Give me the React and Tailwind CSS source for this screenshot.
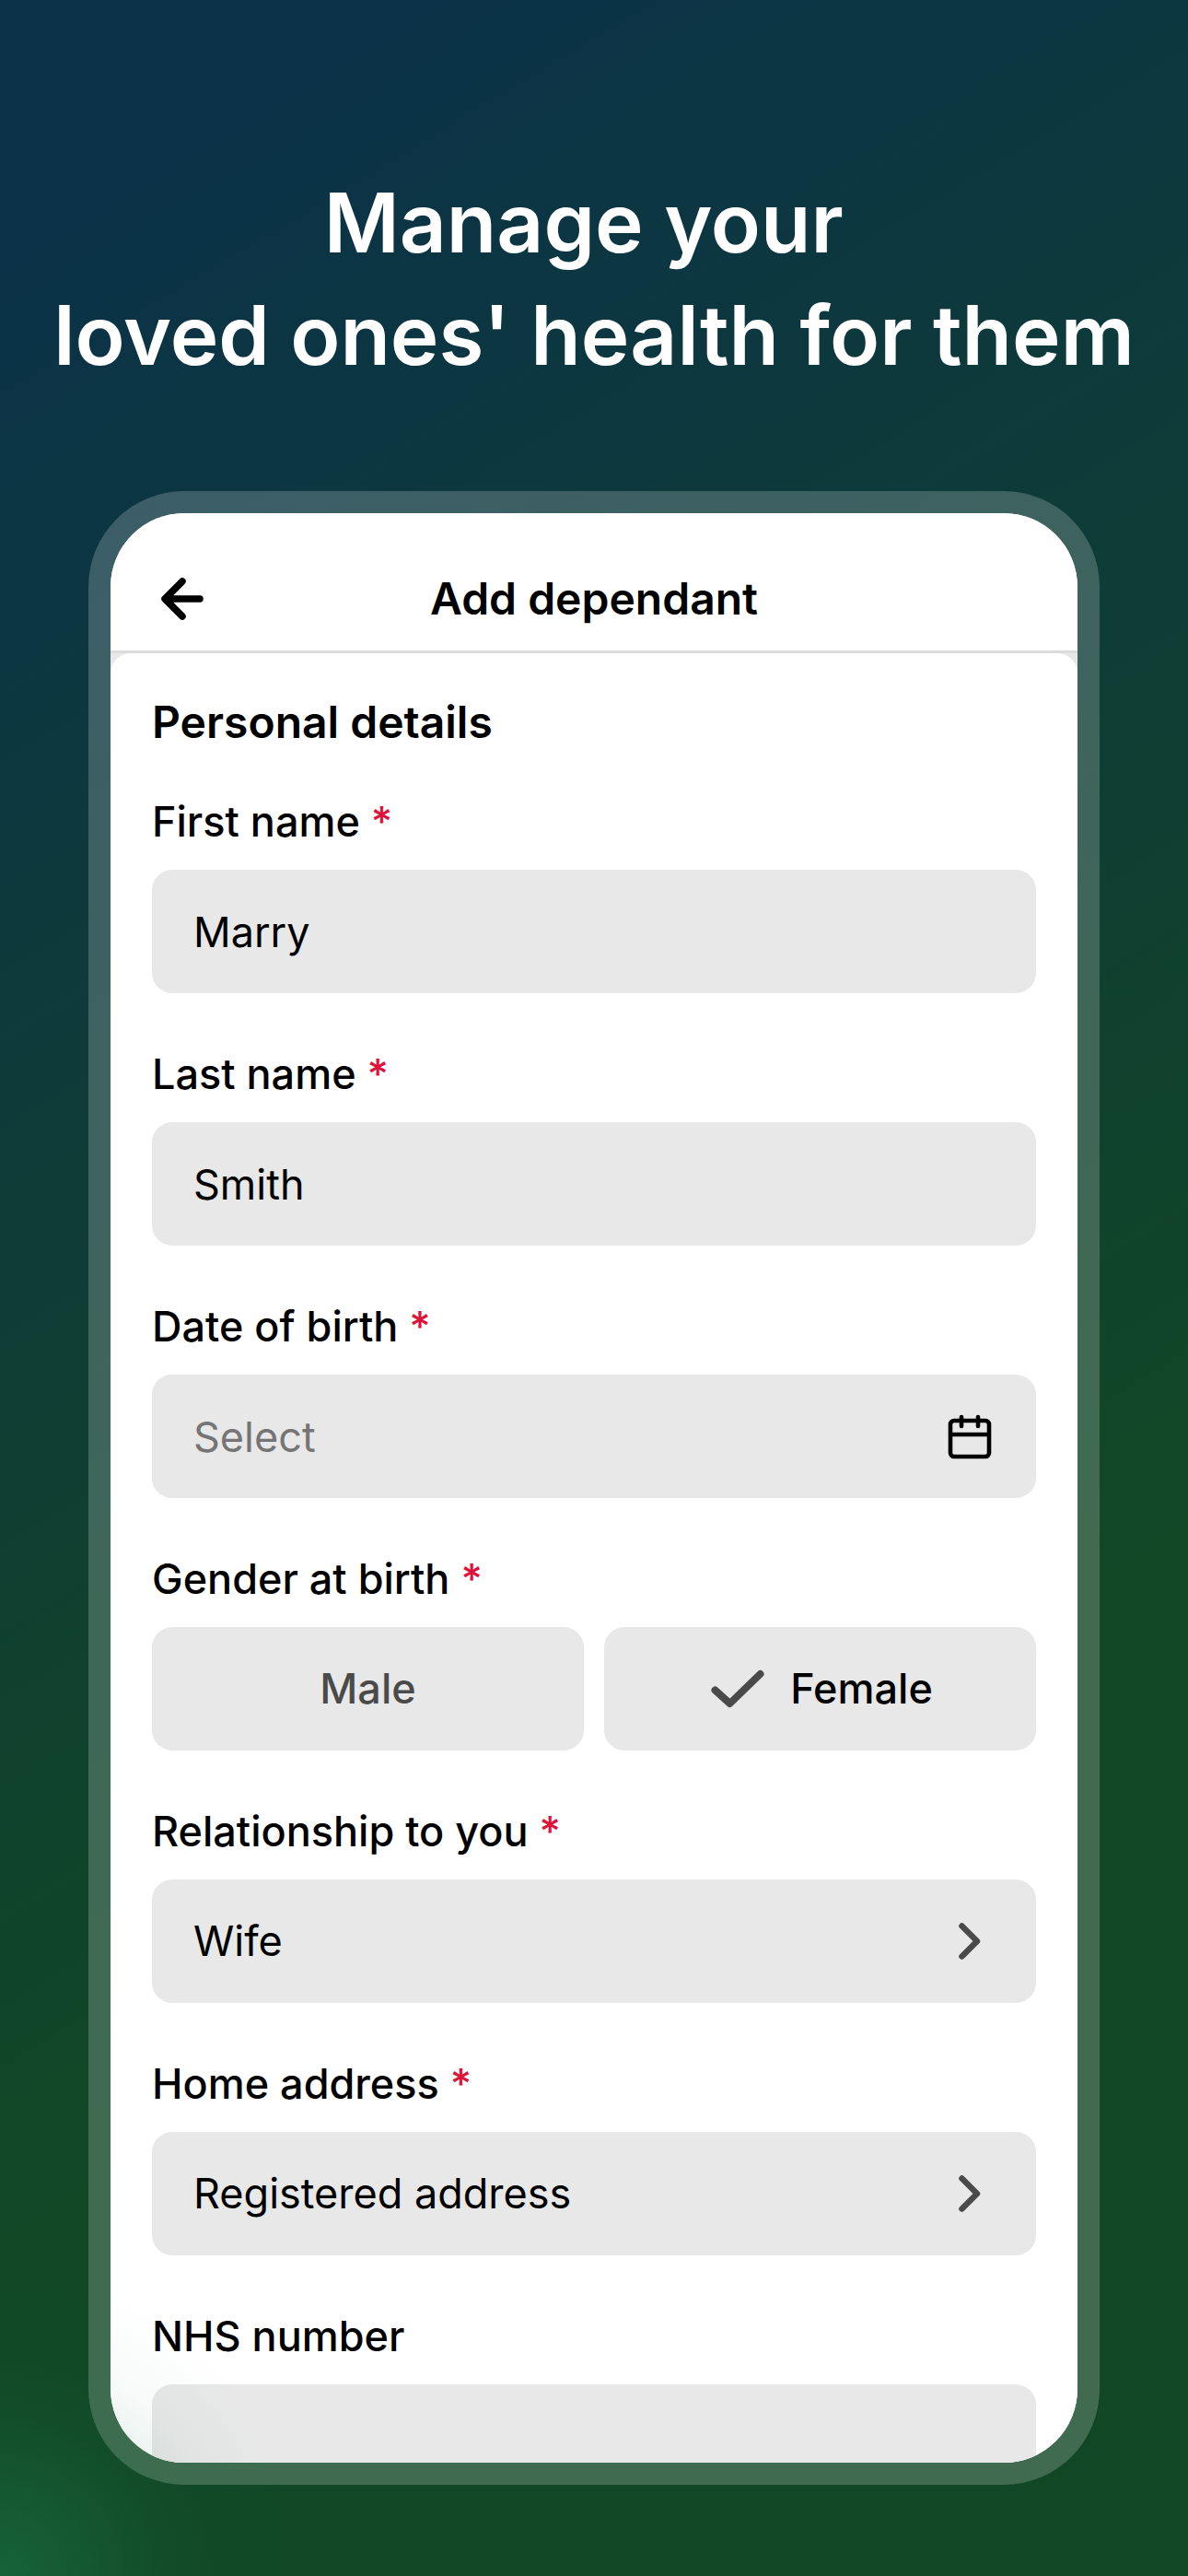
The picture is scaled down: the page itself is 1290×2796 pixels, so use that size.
import { useState } from "react";

const inputStyle =
  "w-full h-[134px] rounded-[22px] bg-[#e8e8e8] px-[45px] text-left text-[45px] text-black placeholder-[#757575] outline-none";

function Label({ id, text, required = true }) {
  return (
    <label htmlFor={id} className="text-[45px] leading-[56px] font-medium">
      {text}
      {required && <span className="text-[#dc143c]"> *</span>}
    </label>
  );
}

function ArrowLeft() {
  return (
    <svg viewBox="0 0 46 46" className="w-[46px] h-[46px]" fill="none">
      <path
        d="M23 4 4 23l19 19M5 23h37"
        stroke="currentColor"
        strokeWidth="7.5"
        strokeLinecap="round"
        strokeLinejoin="round"
      />
    </svg>
  );
}

function CalendarIcon() {
  return (
    <svg viewBox="0 0 48 50" className="w-12 h-[50px] shrink-0" fill="none">
      <path
        d="M7 8h34a4 4 0 0 1 4 4v31a4 4 0 0 1-4 4H7a4 4 0 0 1-4-4V12a4 4 0 0 1 4-4zM3 23h42M15 4v10M33 4v10"
        stroke="currentColor"
        strokeWidth="4.6"
        strokeLinecap="round"
      />
    </svg>
  );
}

function CheckIcon() {
  return (
    <svg viewBox="0 0 58 42" className="w-[58px] h-[42px]" fill="none">
      <path
        d="M4.5 22.5 20.5 37 53.5 5"
        stroke="#4a4a4a"
        strokeWidth="8"
        strokeLinecap="round"
        strokeLinejoin="round"
      />
    </svg>
  );
}

function ChevronRight() {
  return (
    <svg viewBox="0 0 24 40" className="w-6 h-10" fill="none">
      <path
        d="M3.5 3.5 20 20 3.5 36.5"
        stroke="#4a4a4a"
        strokeWidth="6.5"
        strokeLinecap="round"
        strokeLinejoin="round"
      />
    </svg>
  );
}

export default function App() {
  const [firstName, setFirstName] = useState("Marry");
  const [lastName, setLastName] = useState("Smith");
  const [birthDate, setBirthDate] = useState("");
  const [gender, setGender] = useState("Female");
  const [nhsNumber, setNhsNumber] = useState("");

  return (
    <div className="relative min-h-screen overflow-hidden bg-[linear-gradient(149deg,#0b3248_8%,#114725_68%)] font-[Inter,sans-serif] px-24 pt-[181px] pb-[99px]">
      <h1 className="-mx-24 text-center whitespace-pre text-[89px] leading-[122px] font-semibold text-white">
        {"Manage your \nloved ones' health for them"}
      </h1>

      <div className="mt-[108px] rounded-[104px] bg-white/20 p-6">
        <div className="h-[2116px] overflow-hidden rounded-[80px] bg-[#e8e8e8] text-black">
          <header className="grid grid-cols-[1fr_auto_1fr] items-center border-b-3 border-[#dbdbdb] bg-white px-[55px] pt-[58px] pb-[21px]">
            <button type="button" aria-label="Back" className="justify-self-start">
              <ArrowLeft />
            </button>
            <h2 className="text-[48px] leading-[70px] font-semibold">
              Add dependant
            </h2>
          </header>

          <form className="rounded-t-[22px] bg-white px-[45px] pt-[46px] pb-20">
            <h3 className="text-[48px] leading-[58px] font-semibold">
              Personal details
            </h3>

            <div className="mt-[51px] flex flex-col gap-[60px]">
              <div className="flex flex-col gap-6">
                <Label id="firstName" text="First name" />
                <input
                  id="firstName"
                  type="text"
                  value={firstName}
                  onChange={(e) => setFirstName(e.target.value)}
                  className={inputStyle}
                />
              </div>

              <div className="flex flex-col gap-6">
                <Label id="lastName" text="Last name" />
                <input
                  id="lastName"
                  type="text"
                  value={lastName}
                  onChange={(e) => setLastName(e.target.value)}
                  className={inputStyle}
                />
              </div>

              <div className="flex flex-col gap-6">
                <Label id="birthDate" text="Date of birth" />
                <div className="flex items-center rounded-[22px] bg-[#e8e8e8] pr-12">
                  <input
                    id="birthDate"
                    type="text"
                    placeholder="Select"
                    value={birthDate}
                    onChange={(e) => setBirthDate(e.target.value)}
                    className={inputStyle}
                  />
                  <CalendarIcon />
                </div>
              </div>

              <div className="flex flex-col gap-6">
                <Label id="gender" text="Gender at birth" />
                <div className="grid grid-cols-2 gap-[22px]">
                  {["Male", "Female"].map((option) => (
                    <button
                      key={option}
                      id={option === gender ? "gender" : undefined}
                      type="button"
                      aria-pressed={option === gender}
                      onClick={() => setGender(option)}
                      className={`flex h-[134px] items-center justify-center rounded-[22px] bg-[#e8e8e8] text-[45px] font-medium ${
                        option === gender ? "gap-7 pl-1 text-black" : "text-[#4a4a4a]"
                      }`}
                    >
                      {option === gender && <CheckIcon />}
                      {option}
                    </button>
                  ))}
                </div>
              </div>

              <div className="flex flex-col gap-6">
                <Label id="relationship" text="Relationship to you" />
                <button id="relationship" type="button" className={inputStyle}>
                  <span className="flex items-center justify-between pr-[15px]">
                    Wife
                    <ChevronRight />
                  </span>
                </button>
              </div>

              <div className="flex flex-col gap-6">
                <Label id="address" text="Home address" />
                <button id="address" type="button" className={inputStyle}>
                  <span className="flex items-center justify-between pr-[15px]">
                    Registered address
                    <ChevronRight />
                  </span>
                </button>
              </div>

              <div className="flex flex-col gap-6">
                <Label id="nhsNumber" text="NHS number" required={false} />
                <input
                  id="nhsNumber"
                  type="text"
                  value={nhsNumber}
                  onChange={(e) => setNhsNumber(e.target.value)}
                  className={inputStyle}
                />
              </div>
            </div>
          </form>
        </div>
      </div>

      {/* Corner glow */}
      <div className="pointer-events-none absolute bottom-0 left-0 size-[340px] bg-[radial-gradient(circle_at_bottom_left,#1a7a4a8c,#1a7a4a4d_100px,#1a7a4a1a_180px,#1a7a4a08_250px,#1a7a4a00_330px)]" />
    </div>
  );
}
